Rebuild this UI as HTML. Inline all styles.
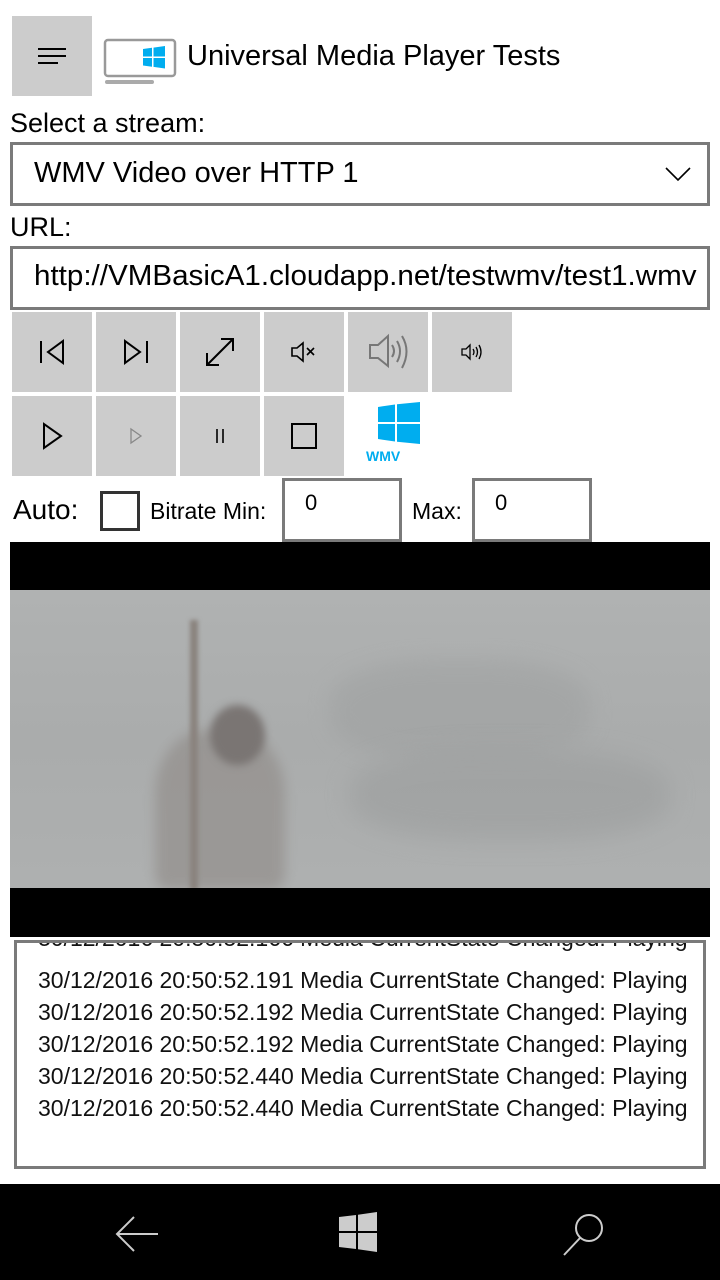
<!DOCTYPE html>
<html><head><meta charset="utf-8"><style>
*{box-sizing:border-box;margin:0;padding:0}
body{width:720px;height:1280px;background:#fff;position:relative;overflow:hidden;font-family:"Liberation Sans",sans-serif;color:#000}
.a{position:absolute}
.btn{position:absolute;width:80px;height:80px;background:#cccccc;display:flex;align-items:center;justify-content:center}
.box{position:absolute;border:3px solid #7a7a7a;background:#fff}
.lbl{position:absolute;font-size:26px;white-space:nowrap}
.log{position:absolute;left:38px;font-size:23px;white-space:nowrap;transform:scaleX(1.0);transform-origin:left top;color:#111}
</style></head><body>
<div class="btn" style="left:12px;top:16px;width:80px;height:80px">
<svg width="32" height="22"><line x1="2" y1="4" x2="30" y2="4" stroke="#000" stroke-width="2"/><line x1="2" y1="11" x2="30" y2="11" stroke="#000" stroke-width="2"/><line x1="2" y1="18" x2="22" y2="18" stroke="#000" stroke-width="2"/></svg></div>
<svg class="a" style="left:103px;top:38px" width="74" height="48">
<rect x="2" y="2" width="70" height="36" rx="3" fill="#fff" stroke="#999" stroke-width="2.5"/>
<rect x="2" y="42" width="49" height="4" rx="2" fill="#aaa"/>
<path d="M40 11 L49 9.8 V18.5 H40Z M50.5 9.6 L62 8 V18.5 H50.5Z M40 20 H49 V28.7 L40 27.5Z M50.5 20 H62 V30.5 L50.5 28.9Z" fill="#00adef"/>
</svg>
<div class="lbl" style="left:187px;top:40px;font-size:29px">Universal Media Player Tests</div>
<div class="lbl" style="left:10px;top:108px;font-size:27px">Select a stream:</div>
<div class="box" style="left:10px;top:142px;width:700px;height:64px"></div>
<div class="lbl" style="left:34px;top:157px;font-size:29px">WMV Video over HTTP 1</div>
<svg class="a" style="left:664px;top:166px" width="28" height="16"><polyline points="2,2 14,14 26,2" fill="none" stroke="#000" stroke-width="1.6"/></svg>
<div class="lbl" style="left:10px;top:212px;font-size:27px">URL:</div>
<div class="box" style="left:10px;top:246px;width:700px;height:64px;overflow:hidden"><div style="position:absolute;left:21px;top:11px;font-size:29px;white-space:nowrap;transform:scaleX(1.02);transform-origin:left">http://VMBasicA1.cloudapp.net/testwmv/test1.wmv</div></div>

<div class="btn" style="left:12px;top:312px"><svg width="30" height="30"><line x1="4" y1="4" x2="4" y2="26" stroke="#000" stroke-width="2"/><polygon points="26,4 26,26 11,15" fill="none" stroke="#000" stroke-width="2"/></svg></div>
<div class="btn" style="left:96px;top:312px"><svg width="30" height="30"><line x1="26" y1="4" x2="26" y2="26" stroke="#000" stroke-width="2"/><polygon points="4,4 4,26 19,15" fill="none" stroke="#000" stroke-width="2"/></svg></div>
<div class="btn" style="left:180px;top:312px"><svg width="34" height="34"><line x1="4" y1="30" x2="30" y2="4" stroke="#000" stroke-width="2"/><polyline points="18,4 30,4 30,16" fill="none" stroke="#000" stroke-width="2"/><polyline points="4,18 4,30 16,30" fill="none" stroke="#000" stroke-width="2"/></svg></div>
<div class="btn" style="left:264px;top:312px"><svg width="30" height="24"><path d="M3 8 H8 L14 3 V21 L8 16 H3Z" fill="none" stroke="#000" stroke-width="1.6"/><path d="M18 8 L25 15 M25 8 L18 15" stroke="#000" stroke-width="1.6"/></svg></div>
<div class="btn" style="left:348px;top:312px"><svg width="44" height="44"><path d="M4 15 H12 L22 6 V36 L12 28 H4Z" fill="none" stroke="#777" stroke-width="2"/><path d="M26 15 Q30 21 26 27" fill="none" stroke="#777" stroke-width="2"/><path d="M31 11 Q37 21 31 32" fill="none" stroke="#777" stroke-width="2"/><path d="M36 6 Q45 21 36 38" fill="none" stroke="#777" stroke-width="2"/></svg></div>
<div class="btn" style="left:432px;top:312px"><svg width="24" height="20"><path d="M2 7 H6 L10 3 V17 L6 13 H2Z" fill="none" stroke="#000" stroke-width="1.3"/><path d="M13 7 Q15 10 13 13 M16 5 Q19 10 16 15 M19 3 Q23 10 19 17" fill="none" stroke="#000" stroke-width="1.3"/></svg></div>

<div class="btn" style="left:12px;top:396px"><svg width="24" height="30"><polygon points="4,3 4,27 21,15" fill="none" stroke="#000" stroke-width="2"/></svg></div>
<div class="btn" style="left:96px;top:396px"><svg width="16" height="20"><polygon points="3,3 3,17 13,10" fill="none" stroke="#888" stroke-width="1.3"/></svg></div>
<div class="btn" style="left:180px;top:396px"><svg width="16" height="20"><line x1="5" y1="3" x2="5" y2="17" stroke="#000" stroke-width="1.6"/><line x1="11" y1="3" x2="11" y2="17" stroke="#000" stroke-width="1.6"/></svg></div>
<div class="btn" style="left:264px;top:396px"><svg width="30" height="30"><rect x="3" y="3" width="24" height="24" fill="none" stroke="#000" stroke-width="2"/></svg></div>
<svg class="a" style="left:376px;top:402px" width="46" height="44"><path d="M2 5 L19 2.5 V20 H2Z M21 2.2 L44 0 V20 H21Z M2 22 H19 V39.5 L2 37Z M21 22 H44 V42 L21 39.8Z" fill="#00adef"/></svg>
<div class="a" style="left:366px;top:448px;font-size:14px;font-weight:bold;color:#00adef">WMV</div>

<div class="lbl" style="left:13px;top:494px;font-size:28px">Auto:</div>
<div class="a" style="left:100px;top:491px;width:40px;height:40px;border:3px solid #333"></div>
<div class="lbl" style="left:150px;top:498px;font-size:23px">Bitrate Min:</div>
<div class="box" style="left:282px;top:478px;width:120px;height:64px"></div>
<div class="lbl" style="left:305px;top:490px;font-size:22px">0</div>
<div class="lbl" style="left:412px;top:498px;font-size:23px">Max:</div>
<div class="box" style="left:472px;top:478px;width:120px;height:64px"></div>
<div class="lbl" style="left:495px;top:490px;font-size:22px">0</div>

<div class="a" style="left:10px;top:542px;width:700px;height:395px;background:#000"></div>
<div class="a" style="left:10px;top:590px;width:700px;height:298px;background:linear-gradient(180deg,#b0b2b2,#aaacac 50%,#aeb0b0);overflow:hidden">
<div class="a" style="left:320px;top:70px;width:260px;height:100px;background:#a0a2a2;border-radius:40%;filter:blur(10px);opacity:.6"></div>
<div class="a" style="left:340px;top:160px;width:320px;height:90px;background:#9c9e9e;border-radius:40%;filter:blur(12px);opacity:.6"></div>
<div class="a" style="left:145px;top:140px;width:130px;height:160px;background:#938f8c;border-radius:40% 40% 10% 10%;filter:blur(6px);opacity:.7"></div>
<div class="a" style="left:180px;top:30px;width:8px;height:270px;background:#8a837e;filter:blur(2px)"></div>
<div class="a" style="left:200px;top:115px;width:55px;height:60px;background:#7a7573;border-radius:50%;filter:blur(4px)"></div>
</div>

<div class="a" style="left:14px;top:940px;width:692px;height:229px;border:3px solid #7a7a7a;overflow:hidden;background:#fff">
<div style="position:absolute;left:0;top:0;width:675px;height:225px;overflow:hidden">
<div class="log" style="left:21px;top:-18px">30/12/2016 20:50:52.166 Media CurrentState Changed: Playing</div>
<div class="log" style="left:21px;top:24px">30/12/2016 20:50:52.191 Media CurrentState Changed: Playing</div>
<div class="log" style="left:21px;top:56px">30/12/2016 20:50:52.192 Media CurrentState Changed: Playing</div>
<div class="log" style="left:21px;top:88px">30/12/2016 20:50:52.192 Media CurrentState Changed: Playing</div>
<div class="log" style="left:21px;top:120px">30/12/2016 20:50:52.440 Media CurrentState Changed: Playing</div>
<div class="log" style="left:21px;top:152px">30/12/2016 20:50:52.440 Media CurrentState Changed: Playing</div>
</div></div>

<div class="a" style="left:0;top:1184px;width:720px;height:96px;background:#000">
<svg class="a" style="left:114px;top:30px" width="46" height="40"><path d="M44 20 H4 M20 3 L3 20 L20 37" fill="none" stroke="#ccc" stroke-width="2"/></svg>
<svg class="a" style="left:338px;top:28px" width="40" height="40"><path d="M1 5 L18 3 V19 H1Z M20 2.7 L39 0 V19 H20Z M1 21 H18 V37 L1 35Z M20 21 H39 V40 L20 37.3Z" fill="#ccc"/></svg>
<svg class="a" style="left:560px;top:26px" width="48" height="48"><circle cx="29" cy="18" r="13" fill="none" stroke="#ccc" stroke-width="2"/><line x1="20" y1="28" x2="4" y2="45" stroke="#ccc" stroke-width="2"/></svg>
</div>
</body></html>
